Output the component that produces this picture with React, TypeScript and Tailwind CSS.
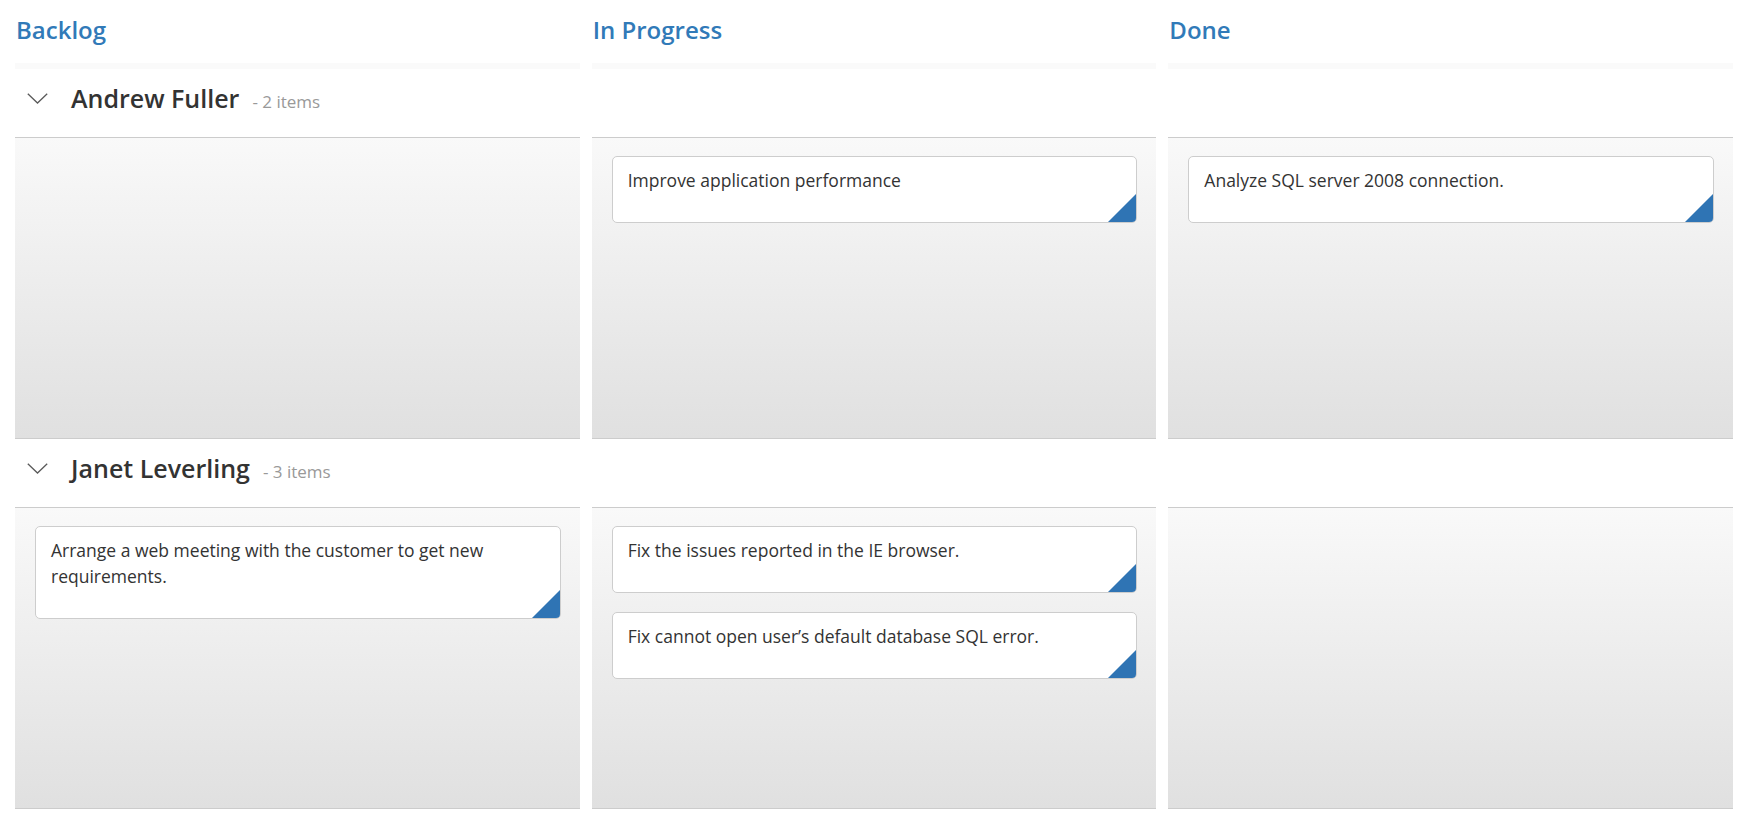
import React from "react";

type Card = { text: string };
type Lane = { name: string; count: number; cols: Card[][] };

const columns = ["Backlog", "In Progress", "Done"];

const lanes: Lane[] = [
  {
    name: "Andrew Fuller",
    count: 2,
    cols: [[], [{ text: "Improve application performance" }], [{ text: "Analyze SQL server 2008 connection." }]],
  },
  {
    name: "Janet Leverling",
    count: 3,
    cols: [
      [{ text: "Arrange a web meeting with the customer to get new requirements." }],
      [
        { text: "Fix the issues reported in the IE browser." },
        { text: "Fix cannot open user\u2019s default database SQL error." },
      ],
      [],
    ],
  },
];

function Chevron() {
  return (
    <svg width="21" height="11" viewBox="0 0 21 11" className="shrink-0">
      <polyline points="0.8,0.8 10.5,10 20.2,0.8" fill="none" stroke="#5a5a5a" strokeWidth="1.3" />
    </svg>
  );
}

function KCard({ text }: Card) {
  return (
    <div className="relative overflow-hidden rounded-[5px] border border-[#cdcdcd] bg-white pl-[15px] pr-[30px] pt-[10px] pb-[29px] text-[17.5px] leading-[26px] text-[#333]">
      {text}
      <svg width="28" height="28" viewBox="0 0 28 28" className="absolute bottom-0 right-0">
        <polygon points="28,0 28,28 0,28" fill="#2f74b4" />
      </svg>
    </div>
  );
}

export default function App() {
  return (
    <div
      className="min-h-[824px] w-full bg-white pl-[15px] pr-[20px]"
      style={{ fontFamily: '"Open Sans", "Noto Sans", sans-serif' }}
    >
      <div className="grid grid-cols-3 gap-x-[12px]">
        {columns.map((c) => (
          <div key={c}>
            <div className="h-[63px] pl-px pt-[14px] text-[24px] font-semibold leading-[32px] text-[#317ab8]">{c}</div>
            <div className="h-[6px] bg-[#fafafa]" />
          </div>
        ))}
      </div>
      {lanes.map((lane) => (
        <div key={lane.name}>
          <div className="grid grid-cols-3 gap-x-[12px]">
            {[0, 1, 2].map((i) => (
              <div key={i} className="h-[69px] border-b border-[#cccccc]">
                {i === 0 && (
                  <div className="flex items-center whitespace-nowrap pl-[12px] pt-[11px]">
                    <Chevron />
                    <div className="ml-[23px] flex items-baseline">
                      <span className="text-[25px] font-semibold leading-[36px] text-[#333]">{lane.name}</span>
                      <span className="ml-[13px] text-[17px] text-[#999]">- {lane.count} items</span>
                    </div>
                  </div>
                )}
              </div>
            ))}
          </div>
          <div className="grid grid-cols-3 gap-x-[12px]">
            {lane.cols.map((cards, i) => (
              <div
                key={i}
                className="flex h-[301px] flex-col gap-[19px] border-b border-[#cccccc] bg-gradient-to-b from-[#f9f9f9] to-[#e0e0e0] pl-[20px] pr-[19px] pt-[18px]"
              >
                {cards.map((card, j) => (
                  <KCard key={j} text={card.text} />
                ))}
              </div>
            ))}
          </div>
        </div>
      ))}
    </div>
  );
}
